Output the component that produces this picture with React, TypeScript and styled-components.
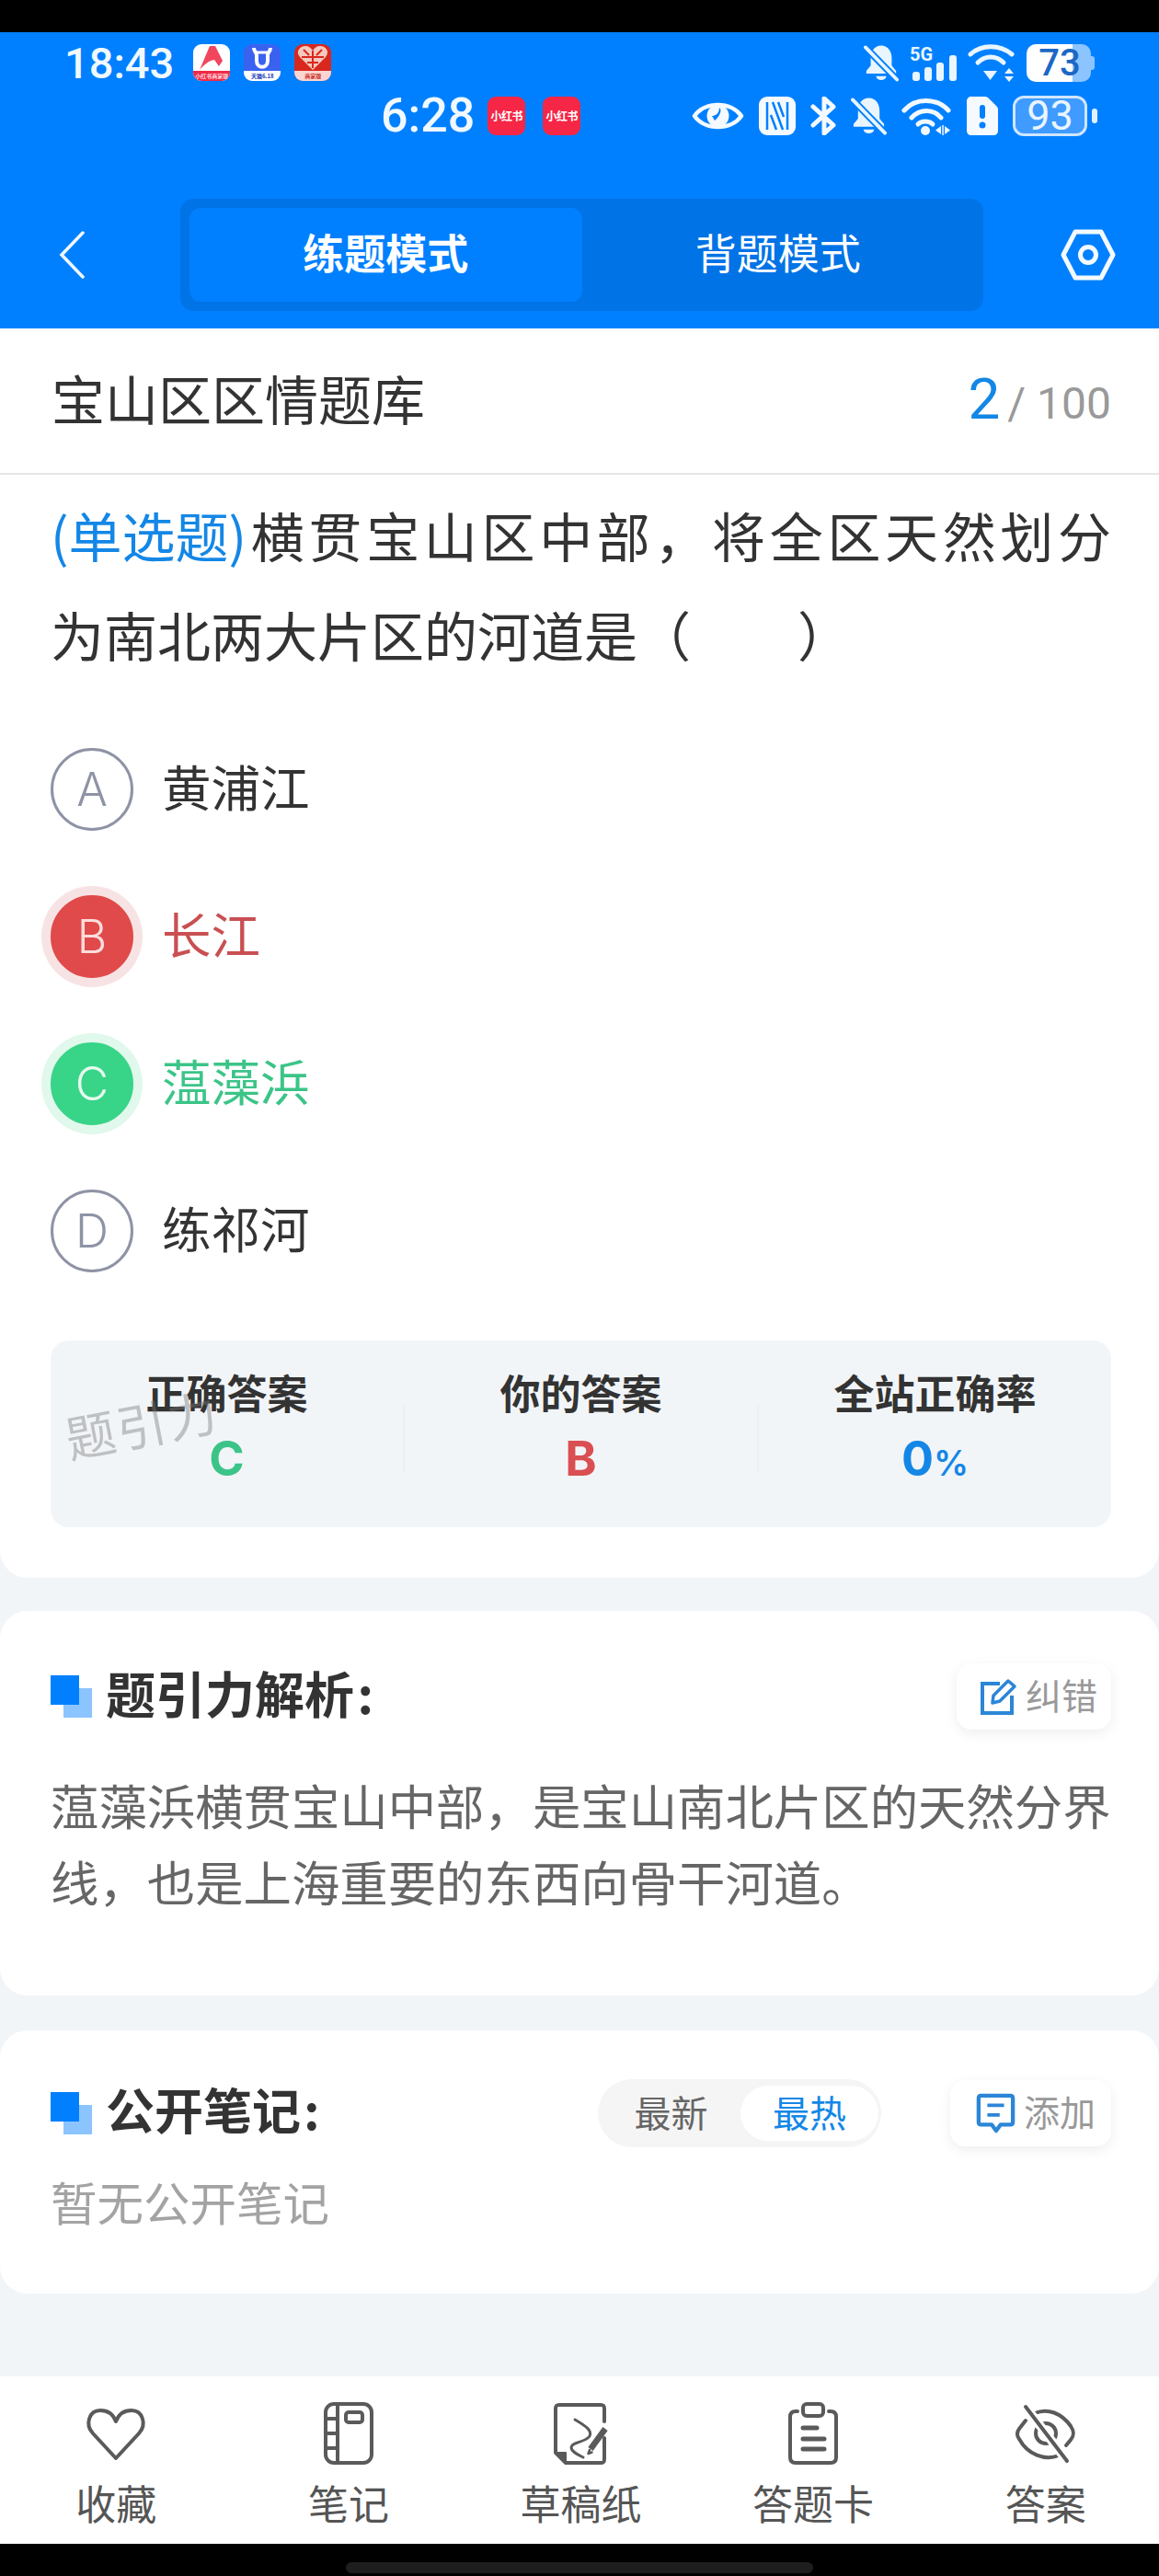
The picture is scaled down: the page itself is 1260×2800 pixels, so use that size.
import React from 'react';
import styled, { createGlobalStyle } from 'styled-components';

const GlobalStyle = createGlobalStyle`
  * { box-sizing: border-box; }
  html, body { margin: 0; padding: 0; background: #000; }
  body { font-family: "Noto Sans CJK SC", "Noto Sans", sans-serif; }
`;

const Page = styled.div`
  width: 1260px;
  height: 2800px;
  display: flex;
  flex-direction: column;
  background: #f2f5f8;
`;

const TopInset = styled.div`
  height: 35px;
  background: #000;
  flex: none;
`;

const Header = styled.header`
  height: 322px;
  flex: none;
  background: #0080ff;
  padding-top: 12px;
  display: flex;
  flex-direction: column;
`;

const StatusRow = styled.div<{ $left: number; $height: number; $top?: number }>`
  display: flex;
  align-items: center;
  height: ${(p) => p.$height}px;
  margin-top: ${(p) => p.$top ?? 0}px;
  padding: 0 70px 0 ${(p) => p.$left}px;
  color: #f1f9ff;
`;

const Clock = styled.span<{ $size: number; $gap: number }>`
  font-family: Roboto, "Liberation Sans", sans-serif;
  font-size: ${(p) => p.$size}px;
  font-weight: 500;
  line-height: 1;
  margin-right: ${(p) => p.$gap}px;
`;

const AppIcon = styled.div<{ $bg: string }>`
  width: 40px;
  height: 40px;
  border-radius: 9px;
  background: ${(p) => p.$bg};
  overflow: hidden;
  display: flex;
  flex-direction: column;
  margin-right: 15px;
  flex: none;
  svg { flex: 1; min-height: 0; display: block; }
`;

const AppBand = styled.div<{ $bg: string; $color: string }>`
  height: 11px;
  flex: none;
  background: ${(p) => p.$bg};
  color: ${(p) => p.$color};
  font-size: 6px;
  line-height: 11px;
  font-weight: 700;
  text-align: center;
  white-space: nowrap;
`;

const RedBookIcon = styled.div`
  width: 41px;
  height: 42px;
  border-radius: 9px;
  background: #f62646;
  color: #fff;
  font-size: 12px;
  font-weight: 700;
  line-height: 42px;
  text-align: center;
  white-space: nowrap;
  margin-right: 19px;
  flex: none;
  letter-spacing: -0.5px;
`;

const StatusIcons = styled.div<{ $gap: number }>`
  margin-left: auto;
  display: flex;
  align-items: center;
  gap: ${(p) => p.$gap}px;
  svg { display: block; flex: none; }
`;

const SolidBattery = styled.div`
  position: relative;
  width: 70px;
  height: 41px;
  border-radius: 10px;
  margin-right: 4px;
  background: linear-gradient(90deg, #fff 0 72%, #8cc4ff 72% 100%);
  color: #1c68c4;
  font-family: Roboto, "Liberation Sans", sans-serif;
  font-size: 40px;
  font-weight: 500;
  line-height: 41px;
  text-align: center;
  padding-left: 2px;
  &::after {
    content: '';
    position: absolute;
    right: -4px;
    top: 13px;
    width: 4px;
    height: 15px;
    border-radius: 0 3px 3px 0;
    background: #8cc4ff;
  }
`;

const OutlineBattery = styled.div`
  position: relative;
  width: 81px;
  height: 44px;
  border: 3px solid #cfe6ff;
  border-radius: 12px;
  margin-right: 8px;
  background: #3f9bff;
  background-clip: padding-box;
  color: #eaf5ff;
  font-family: Roboto, "Liberation Sans", sans-serif;
  font-size: 45px;
  line-height: 38px;
  text-align: center;
  &::after {
    content: '';
    position: absolute;
    right: -14px;
    top: 11px;
    width: 6px;
    height: 16px;
    border-radius: 3px;
    background: #e2f1ff;
  }
`;

const NavRow = styled.div`
  display: flex;
  align-items: center;
  height: 122px;
  margin-top: 67px;
  padding-left: 64px;
  svg { flex: none; display: block; }
`;

const ModeTabs = styled.div`
  width: 873px;
  height: 122px;
  margin: 0 84px 0 104px;
  padding: 10px;
  display: flex;
  flex: none;
  background: #0073e6;
  border-radius: 14px;
`;

const ModeTab = styled.div<{ $active?: boolean }>`
  flex: 1;
  height: 102px;
  border-radius: 12px;
  background: ${(p) => (p.$active ? '#0080ff' : 'transparent')};
  color: #fff;
  font-size: 45px;
  font-weight: ${(p) => (p.$active ? 700 : 400)};
  line-height: 95px;
  text-align: center;
`;

const MainCard = styled.section`
  background: #fff;
  border-radius: 0 0 30px 30px;
  height: 1358px;
  flex: none;
  position: relative;
`;

const TitleRow = styled.div`
  height: 159px;
  padding: 0 52px 0 56px;
  border-bottom: 2px solid #e6e6e6;
  display: flex;
  align-items: center;
  justify-content: space-between;
`;

const BankTitle = styled.h1`
  margin: -8px 0 0;
  font-size: 58px;
  font-weight: 400;
  color: #333;
`;

const Progress = styled.div`
  margin-top: -5px;
  display: flex;
  align-items: baseline;
  color: #999;
  font-family: Roboto, "Liberation Sans", sans-serif;
  font-size: 48px;
  b {
    font-size: 62px;
    font-weight: 400;
    color: #1487e6;
    margin-right: 8px;
  }
`;

const Question = styled.div`
  padding: 11px 52px 0 55px;
  font-size: 58px;
  line-height: 108px;
  color: #333;
`;

// the first line is stretched edge to edge, the tag stays at its natural width
const QuestionLead = styled.div`
  text-align: justify;
  text-align-last: justify;
  text-justify: inter-character;
  span { display: inline-block; color: #1487e6; }
`;

const Options = styled.div`
  margin-top: 70px;
  padding-left: 55px;
  display: flex;
  flex-direction: column;
  gap: 70px;
`;

const OptionRow = styled.div`
  display: flex;
  align-items: center;
  gap: 31px;
  height: 90px;
`;

const tones = {
  idle: { circle: 'transparent', ring: 'transparent', border: '#8e93a5', letter: '#8e93a5', text: '#333' },
  wrong: { circle: '#e04a4a', ring: '#f8e3e4', border: '#e04a4a', letter: '#fbdcdc', text: '#c94f52' },
  right: { circle: '#38d488', ring: '#e1f8ec', border: '#38d488', letter: '#e6fbf0', text: '#3cc488' },
};

type Tone = keyof typeof tones;

const OptionBadge = styled.div<{ $tone: Tone }>`
  width: 90px;
  height: 90px;
  border-radius: 50%;
  border: 3px solid ${(p) => tones[p.$tone].border};
  background: ${(p) => tones[p.$tone].circle};
  box-shadow: 0 0 0 10px ${(p) => tones[p.$tone].ring};
  color: ${(p) => tones[p.$tone].letter};
  font-family: Inter, "Liberation Sans", sans-serif;
  font-size: 50px;
  font-weight: 300;
  display: flex;
  align-items: center;
  justify-content: center;
`;

const OptionText = styled.span<{ $tone: Tone }>`
  margin-top: -10px;
  color: ${(p) => tones[p.$tone].text};
  font-size: 53.5px;
`;

const ResultBox = styled.div`
  margin: 74px 52px 0 55px;
  height: 203px;
  border-radius: 20px;
  background: #f2f5f8;
  display: flex;
`;

const ResultCell = styled.div`
  flex: 1;
  padding-top: 28px;
  display: flex;
  flex-direction: column;
  align-items: center;
`;

const ResultLabel = styled.div`
  font-size: 44px;
  font-weight: 700;
  line-height: 56px;
  color: #333;
`;

const ResultValue = styled.div<{ $color: string }>`
  margin-top: 15px;
  font-family: Inter, "Liberation Sans", sans-serif;
  font-size: 52px;
  font-weight: 700;
  line-height: 60px;
  color: ${(p) => p.$color};
  small { font-size: 38px; font-weight: 600; }
`;

const ResultDivider = styled.div`
  width: 2px;
  height: 72px;
  margin-top: 71px;
  background: #eceef1;
  flex: none;
`;

const Watermark = styled.div`
  position: absolute;
  left: 70px;
  top: 1150px;
  font-size: 54px;
  letter-spacing: 2px;
  color: rgba(120, 120, 120, 0.42);
  transform: rotate(-11deg);
  white-space: nowrap;
`;

const Card = styled.section<{ $top: number; $height: number; $pad: number }>`
  margin-top: ${(p) => p.$top}px;
  height: ${(p) => p.$height}px;
  flex: none;
  padding: ${(p) => p.$pad}px 52px 0 55px;
  background: #fff;
  border-radius: 30px;
`;

const CardHead = styled.div`
  display: flex;
  align-items: center;
  height: 72px;
`;

const Squares = styled.div`
  position: relative;
  width: 45px;
  height: 46px;
  flex: none;
  margin-right: 15px;
  background: linear-gradient(#8cc4ff, #8cc4ff) right bottom / 31px 32px no-repeat;
  &::before {
    content: '';
    position: absolute;
    left: 0;
    top: 0;
    width: 31px;
    height: 32px;
    background: #0080ff;
  }
`;

const CardTitle = styled.h2<{ $size: number }>`
  margin: -10px 0 0;
  font-size: ${(p) => p.$size}px;
  font-weight: 700;
  color: #333;
  white-space: nowrap;
`;

const GhostButton = styled.div<{ $width: number; $tail?: boolean }>`
  margin-left: ${(p) => (p.$tail ? 0 : 'auto')};
  width: ${(p) => p.$width}px;
  height: 72px;
  flex: none;
  padding: 0 0 6px 11px;
  border-radius: 16px;
  background: #fff;
  box-shadow: 0 4px 14px rgba(0, 0, 0, 0.07);
  display: flex;
  align-items: center;
  justify-content: center;
  gap: 9px;
  color: #999;
  font-size: 39px;
  white-space: nowrap;
  svg { display: block; flex: none; margin-top: 6px; }
`;

const AnalysisText = styled.p`
  margin: 40px 0 0;
  font-size: 52.4px;
  line-height: 83px;
  color: #666;
  white-space: nowrap;
`;

const SortSwitch = styled.div`
  margin-left: auto;
  margin-right: 75px;
  width: 308px;
  height: 74px;
  padding: 7px 3px 7px 0;
  border-radius: 37px;
  background: #f5f5f5;
  display: flex;
  flex: none;
`;

const SortOption = styled.div<{ $active?: boolean }>`
  width: ${(p) => (p.$active ? 151 : 156)}px;
  height: 60px;
  padding-left: ${(p) => (p.$active ? 0 : 4)}px;
  border-radius: 30px;
  background: ${(p) => (p.$active ? '#fff' : 'transparent')};
  color: ${(p) => (p.$active ? '#1487e6' : '#666')};
  font-size: 40px;
  line-height: 56px;
  text-align: center;
`;

const EmptyNote = styled.p`
  margin: 24px 0 0;
  font-size: 50.5px;
  line-height: 70px;
  color: #a3a3a3;
`;

const Spacer = styled.div`
  flex: 1;
`;

const BottomNav = styled.nav`
  height: 182px;
  flex: none;
  background: #fff;
  padding-top: 27px;
  display: flex;
`;

const NavItem = styled.div`
  width: 252.6px;
  flex: none;
  display: flex;
  flex-direction: column;
  align-items: center;
  color: #555;
  font-size: 44px;
  line-height: 60px;
  svg { display: block; margin-bottom: 10px; }
`;

const GestureArea = styled.div`
  height: 35px;
  flex: none;
  background: #000;
  padding-top: 20px;
  display: flex;
  justify-content: center;
`;

const HomePill = styled.div`
  width: 508px;
  height: 12px;
  border-radius: 6px;
  background: #1e1e1e;
`;

const BellOff = ({ w, h }: { w: number; h: number }) => (
  <svg width={w} height={h} viewBox="0 0 40 42">
    <path d="M20 1c8 0 12 7 12 14v9l5 6v3H3v-3l5-6v-9C8 8 12 1 20 1z" fill="#e9f5ff" />
    <path d="M14 36h12c-1 6-11 6-12 0z" fill="#e9f5ff" />
    <path d="M2 3l36 37" stroke="#0080ff" strokeWidth="8" />
    <path d="M2 3l36 37" stroke="#e9f5ff" strokeWidth="4" strokeLinecap="round" />
  </svg>
);

const Signal = () => (
  <svg width={51} height={42} viewBox="0 0 51 42">
    <text x="0" y="19" fontFamily="Roboto, sans-serif" fontSize="20" fontWeight="700" fill="#e9f5ff">5G</text>
    <rect x="3" y="31" width="8" height="10" rx="3" fill="#e9f5ff" />
    <rect x="16" y="26" width="8" height="15" rx="3" fill="#e9f5ff" />
    <rect x="29" y="21" width="8" height="20" rx="3" fill="#e9f5ff" />
    <rect x="43" y="13" width="8" height="28" rx="3" fill="#e9f5ff" />
  </svg>
);

const WifiUpDown = () => (
  <svg width={52} height={42} viewBox="0 0 52 42" fill="none">
    <path d="M3 12C15 1 35 1 48 12" stroke="#e9f5ff" strokeWidth="5" strokeLinecap="round" />
    <path d="M11 21c8-8 20-8 28 0" stroke="#e9f5ff" strokeWidth="5" strokeLinecap="round" />
    <path d="M17 30h15l-7.500 10z" fill="#e9f5ff" />
    <path d="M40 33l5-6 5 6zM40 36h10l-5 6z" fill="#e9f5ff" />
  </svg>
);

const WifiLeftRight = () => (
  <svg width={55} height={42} viewBox="0 0 55 42" fill="none">
    <path d="M3 15C15 1 38 1 51 15" stroke="#f1f9ff" strokeWidth="5" strokeLinecap="round" />
    <path d="M11 23c9-10 24-10 32 0" stroke="#f1f9ff" strokeWidth="5" strokeLinecap="round" />
    <path d="M18 30c4-4 12-4 16 0" stroke="#f1f9ff" strokeWidth="5" strokeLinecap="round" />
    <circle cx="26" cy="37" r="5" fill="#f1f9ff" />
    <path d="M43 32v9l-6-4.500zM47 32v9l6-4.500z" fill="#f1f9ff" />
    <rect x="44.300" y="31" width="1.500" height="11" fill="#f1f9ff" />
  </svg>
);

const Eye = () => (
  <svg width={57} height={38} viewBox="0 0 57 38" fill="none">
    <path d="M3 19C14 3 43 3 54 19C43 35 14 35 3 19z" stroke="#f4faff" strokeWidth="4.500" strokeLinejoin="round" />
    <circle cx="28.500" cy="19" r="12" fill="#f4faff" />
    <path d="M22 19c3 0 8-2 8-9 4 3-1 11-5 14z" fill="#0080ff" />
  </svg>
);

const Nfc = () => (
  <svg width={40} height={42} viewBox="0 0 40 42">
    <rect width="40" height="42" rx="9" fill="#f4faff" />
    <path d="M9 6v30M31 6v30M15 6l11 30M21 6l6 16M13 20l6 16" stroke="#0080ff" strokeWidth="2.500" fill="none" />
  </svg>
);

const Bluetooth = () => (
  <svg width={28} height={42} viewBox="0 0 28 42" fill="none">
    <path d="M3 11l22 20-10 9V2l10 9L3 31" stroke="#f4faff" strokeWidth="5" strokeLinejoin="round" strokeLinecap="round" />
  </svg>
);

const SimAlert = () => (
  <svg width={34} height={42} viewBox="0 0 34 42">
    <path d="M5 0h15c2 0 3 1 4 2l8 8c1 1 2 2 2 4v23c0 3-2 5-5 5H5c-3 0-5-2-5-5V5c0-3 2-5 5-5z" fill="#f4faff" />
    <rect x="14" y="9" width="6" height="15" rx="3" fill="#0080ff" />
    <circle cx="17" cy="31" r="3.500" fill="#0080ff" />
  </svg>
);

const Chevron = () => (
  <svg width={28} height={52} viewBox="0 0 28 52" fill="none">
    <path d="M26 2L3 26l23 24" stroke="#f0f8ff" strokeWidth="3.500" strokeLinecap="round" />
  </svg>
);

const HexNut = () => (
  <svg width={60} height={56} viewBox="0 0 60 56" fill="none">
    <path d="M16 3h28l13 25-13 25H16L3 28z" stroke="#f4faff" strokeWidth="5" strokeLinejoin="round" />
    <circle cx="30" cy="28" r="8.500" stroke="#f4faff" strokeWidth="5" />
  </svg>
);

const EditIcon = () => (
  <svg width={40} height={40} viewBox="0 0 40 40" fill="none">
    <path d="M21 6H2v32h32V19" stroke="#2b86d8" strokeWidth="4" />
    <path d="M13 27l1-8L30 3l7 6-16 16z" stroke="#2b86d8" strokeWidth="3.500" strokeLinejoin="round" />
  </svg>
);

const NoteIcon = () => (
  <svg width={43} height={44} viewBox="0 0 45 46" fill="none">
    <path d="M6 3h33c2 0 3 1 3 3v27c0 2-1 3-3 3H28l-5 7-5-7H6c-2 0-3-1-3-3V6c0-2 1-3 3-3z" stroke="#2b86d8" strokeWidth="4.500" strokeLinejoin="round" />
    <path d="M13 14h19M13 25h14" stroke="#2b86d8" strokeWidth="4" />
  </svg>
);

const NAV_STROKE = { stroke: '#5a5a5a', strokeWidth: 4, fill: 'none', strokeLinecap: 'round', strokeLinejoin: 'round' } as const;

const navIcons: Record<string, React.ReactNode> = {
  收藏: <path {...NAV_STROKE} d="M35 62L10 35C1 25 6 10 18 10c8 0 14 4 17 12 3-8 9-12 17-12 12 0 17 15 8 25z" />,
  笔记: (
    <g {...NAV_STROKE}>
      <rect x="10" y="3" width="50" height="64" rx="9" />
      <path d="M23 3v64M10 19h13M10 35h13M10 51h13" />
      <rect x="32" y="12" width="18" height="11" rx="3" />
    </g>
  ),
  草稿纸: (
    <g {...NAV_STROKE}>
      <path d="M61 22V8c0-3-1-4-4-4H12C9 4 8 5 8 8v48l11 11h38c3 0 4-1 4-4V40" />
      <path d="M8 56h11v11z" fill="#5a5a5a" strokeWidth="2" />
      <path d="M29 20c12 7 19 12 16 18-5 7-19 6-20 12 0 5 7 8 13 11" strokeWidth="3" />
      <path d="M46 52l16-22" strokeWidth="6.500" strokeLinecap="butt" />
      <path d="M45 53l-1.500 4 4-1.500" strokeWidth="2.500" />
    </g>
  ),
  答题卡: (
    <g {...NAV_STROKE}>
      <path d="M18 11h-2c-4 0-6 2-6 6v44c0 4 2 6 6 6h38c4 0 6-2 6-6V17c0-4-2-6-6-6h-2" />
      <rect x="24" y="3" width="22" height="13" rx="4" />
      <path d="M24 29h15M24 41h23M24 52h23" strokeWidth="5" />
    </g>
  ),
  答案: (
    <g {...NAV_STROKE}>
      <path d="M23 13c14-6 29 0 39 14 4 6 4 10 0 15l-5 6" />
      <path d="M13 21l-7 9c-3 4-3 7 0 11 9 17 28 24 43 18" />
      <circle cx="35" cy="35" r="11" />
      <path d="M13 6l45 59" stroke="#fff" strokeWidth="10" strokeLinecap="butt" />
      <path d="M13 6l45 59" />
    </g>
  ),
};

const App = () => (
  <Page>
    <GlobalStyle />
    <TopInset />
    <Header>
      <StatusRow $left={70} $height={42}>
        <Clock $size={47} $gap={21}>18:43</Clock>
        <AppIcon $bg="#fff">
          <svg viewBox="0 0 40 29">
            <path d="M7 28L18 2h6l8 16-4 6-5-7c-6 1-11 5-16 11z" fill="#f0475c" />
          </svg>
          <AppBand $bg="#ee2a46" $color="#ffd9de">小红书商家版</AppBand>
        </AppIcon>
        <AppIcon $bg="#3a62f0">
          <svg viewBox="0 0 40 29" fill="none">
            <path d="M11 4c0 4 3 5 3 8v6c0 9 12 9 12 0v-6c0-3 3-4 3-8" stroke="#fff" strokeWidth="4" />
            <path d="M12 9h16" stroke="#fff" strokeWidth="3" />
          </svg>
          <AppBand $bg="#fff" $color="#2140b8">天猫6.18</AppBand>
        </AppIcon>
        <AppIcon $bg="#d8281e">
          <svg viewBox="0 0 40 29" fill="none">
            <path d="M20 28L6 14C1 8 6 2 12 2c4 0 6 2 8 5 2-3 4-5 8-5 6 0 11 6 6 12z" fill="#f5c9bf" />
            <path d="M10 6l6 6M30 6l-6 6M8 14h24M14 20h12M20 7v19" stroke="#d8281e" strokeWidth="2" />
          </svg>
          <AppBand $bg="#fbd5d0" $color="#c9302a">商家版</AppBand>
        </AppIcon>
        <StatusIcons $gap={12}>
          <BellOff w={38} h={41} />
          <Signal />
          <WifiUpDown />
          <SolidBattery>73</SolidBattery>
        </StatusIcons>
      </StatusRow>
      <StatusRow $left={414} $height={46} $top={14}>
        <Clock $size={52} $gap={14}>6:28</Clock>
        <RedBookIcon>小红书</RedBookIcon>
        <RedBookIcon>小红书</RedBookIcon>
        <StatusIcons $gap={16}>
          <Eye />
          <Nfc />
          <Bluetooth />
          <BellOff w={39} h={42} />
          <WifiLeftRight />
          <SimAlert />
          <OutlineBattery>93</OutlineBattery>
        </StatusIcons>
      </StatusRow>
      <NavRow>
        <Chevron />
        <ModeTabs>
          <ModeTab $active>练题模式</ModeTab>
          <ModeTab>背题模式</ModeTab>
        </ModeTabs>
        <HexNut />
      </NavRow>
    </Header>

    <MainCard>
      <TitleRow>
        <BankTitle>宝山区区情题库</BankTitle>
        <Progress>
          <b>2</b>/ 100
        </Progress>
      </TitleRow>
      <Question>
        <QuestionLead>
          <span>(单选题)</span>横贯宝山区中部，将全区天然划分
        </QuestionLead>
        <div>为南北两大片区的河道是（{'\u3000\u3000'}）</div>
      </Question>
      <Options>
        <OptionRow>
          <OptionBadge $tone="idle">A</OptionBadge>
          <OptionText $tone="idle">黄浦江</OptionText>
        </OptionRow>
        <OptionRow>
          <OptionBadge $tone="wrong">B</OptionBadge>
          <OptionText $tone="wrong">长江</OptionText>
        </OptionRow>
        <OptionRow>
          <OptionBadge $tone="right">C</OptionBadge>
          <OptionText $tone="right">蕰藻浜</OptionText>
        </OptionRow>
        <OptionRow>
          <OptionBadge $tone="idle">D</OptionBadge>
          <OptionText $tone="idle">练祁河</OptionText>
        </OptionRow>
      </Options>
      <ResultBox>
        <ResultCell>
          <ResultLabel>正确答案</ResultLabel>
          <ResultValue $color="#3cc488">C</ResultValue>
        </ResultCell>
        <ResultDivider />
        <ResultCell>
          <ResultLabel>你的答案</ResultLabel>
          <ResultValue $color="#d94f52">B</ResultValue>
        </ResultCell>
        <ResultDivider />
        <ResultCell>
          <ResultLabel>全站正确率</ResultLabel>
          <ResultValue $color="#1487e6">
            0<small>%</small>
          </ResultValue>
        </ResultCell>
      </ResultBox>
      <Watermark>题引力</Watermark>
    </MainCard>

    <Card $top={36} $height={418} $pad={57}>
      <CardHead>
        <Squares />
        <CardTitle $size={54}>题引力解析{'\u200a'}:</CardTitle>
        <GhostButton $width={168}>
          <EditIcon />
          纠错
        </GhostButton>
      </CardHead>
      <AnalysisText>
        蕰藻浜横贯宝山中部，是宝山南北片区的天然分界
        <br />
        线，也是上海重要的东西向骨干河道。
      </AnalysisText>
    </Card>

    <Card $top={38} $height={286} $pad={54}>
      <CardHead>
        <Squares />
        <CardTitle $size={53}>公开笔记{'\u200a'}:</CardTitle>
        <SortSwitch>
          <SortOption>最新</SortOption>
          <SortOption $active>最热</SortOption>
        </SortSwitch>
        <GhostButton $width={175} $tail>
          <NoteIcon />
          添加
        </GhostButton>
      </CardHead>
      <EmptyNote>暂无公开笔记</EmptyNote>
    </Card>

    <Spacer />

    <BottomNav>
      {Object.entries(navIcons).map(([label, icon]) => (
        <NavItem key={label}>
          <svg width={70} height={70} viewBox="0 0 70 70">
            {icon}
          </svg>
          {label}
        </NavItem>
      ))}
    </BottomNav>
    <GestureArea>
      <HomePill />
    </GestureArea>
  </Page>
);

export default App;
